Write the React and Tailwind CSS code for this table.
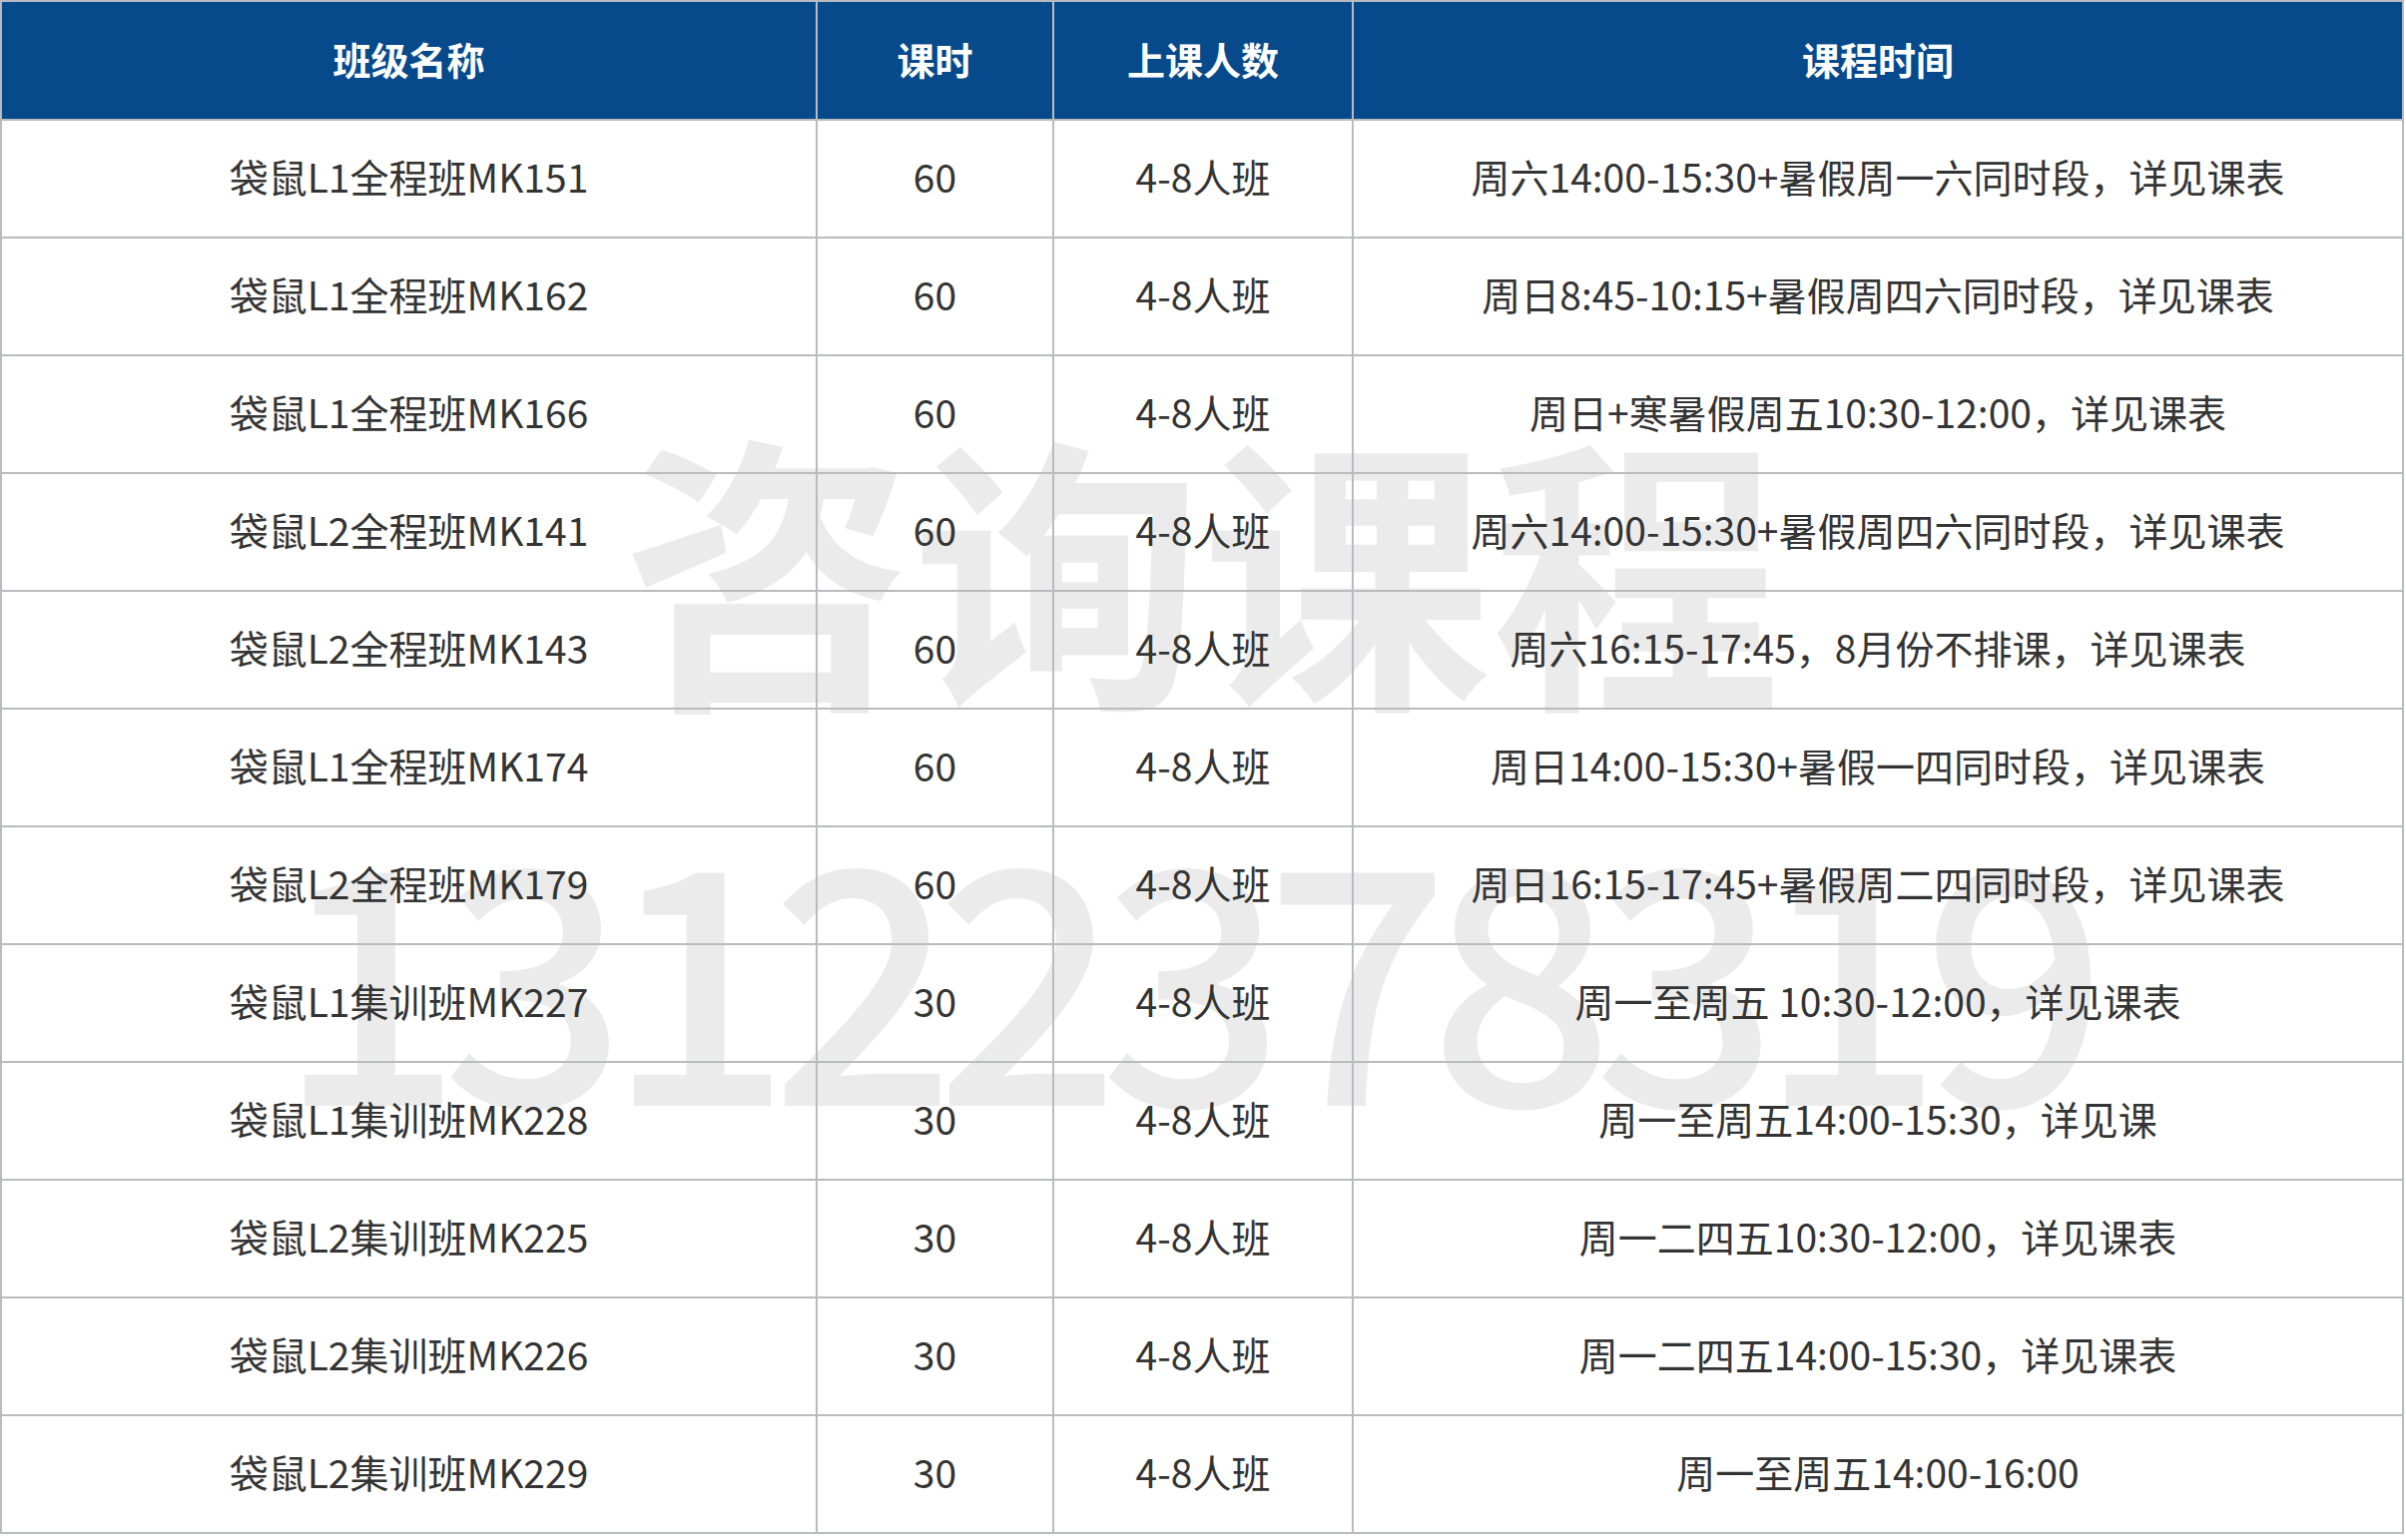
import React from 'react';

const rows = [
  ['袋鼠L1全程班MK151', '60', '4-8人班', '周六14:00-15:30+暑假周一六同时段，详见课表'],
  ['袋鼠L1全程班MK162', '60', '4-8人班', '周日8:45-10:15+暑假周四六同时段，详见课表'],
  ['袋鼠L1全程班MK166', '60', '4-8人班', '周日+寒暑假周五10:30-12:00，详见课表'],
  ['袋鼠L2全程班MK141', '60', '4-8人班', '周六14:00-15:30+暑假周四六同时段，详见课表'],
  ['袋鼠L2全程班MK143', '60', '4-8人班', '周六16:15-17:45，8月份不排课，详见课表'],
  ['袋鼠L1全程班MK174', '60', '4-8人班', '周日14:00-15:30+暑假一四同时段，详见课表'],
  ['袋鼠L2全程班MK179', '60', '4-8人班', '周日16:15-17:45+暑假周二四同时段，详见课表'],
  ['袋鼠L1集训班MK227', '30', '4-8人班', '周一至周五 10:30-12:00，详见课表'],
  ['袋鼠L1集训班MK228', '30', '4-8人班', '周一至周五14:00-15:30，详见课'],
  ['袋鼠L2集训班MK225', '30', '4-8人班', '周一二四五10:30-12:00，详见课表'],
  ['袋鼠L2集训班MK226', '30', '4-8人班', '周一二四五14:00-15:30，详见课表'],
  ['袋鼠L2集训班MK229', '30', '4-8人班', '周一至周五14:00-16:00'],
];

const headers = ['班级名称', '课时', '上课人数', '课程时间'];

export default function App() {
  return (
    <div className="w-[2410px] h-[1543px] bg-white font-['Noto_Sans_CJK_SC','Noto_Sans',sans-serif]">
      <div className="relative w-[2408px]">
        {/* watermark */}
        <div className="absolute inset-x-0 top-[418px] z-0 text-center text-[290px] leading-none font-bold text-[#ebebeb] select-none pointer-events-none">
          咨询课程
        </div>
        <div className="absolute left-[-40px] right-0 top-[803px] z-0 text-center text-[326px] leading-none font-medium tracking-[-21px] text-[#ebebeb] select-none pointer-events-none">
          13122378319
        </div>

        <table className="relative z-10 w-[2408px] table-fixed border-collapse">
          <colgroup>
            <col className="w-[817px]" />
            <col className="w-[237px]" />
            <col className="w-[300px]" />
            <col />
          </colgroup>
          <thead>
            <tr className="h-[119px] bg-[#074a8b]">
              {headers.map((h) => (
                <th
                  key={h}
                  className="border-2 border-[#b8bbc0] pb-[5px] text-center align-middle text-[38px] font-bold text-white"
                >
                  {h}
                </th>
              ))}
            </tr>
          </thead>
          <tbody>
            {rows.map((r) => (
              <tr key={r[0]} className="h-[118px]">
                {r.map((c, i) => (
                  <td
                    key={i}
                    className="border-2 border-[#b8bbc0] pb-[5px] text-center align-middle text-[39px] text-[#343434] whitespace-nowrap"
                  >
                    {c}
                  </td>
                ))}
              </tr>
            ))}
          </tbody>
        </table>
      </div>
    </div>
  );
}
